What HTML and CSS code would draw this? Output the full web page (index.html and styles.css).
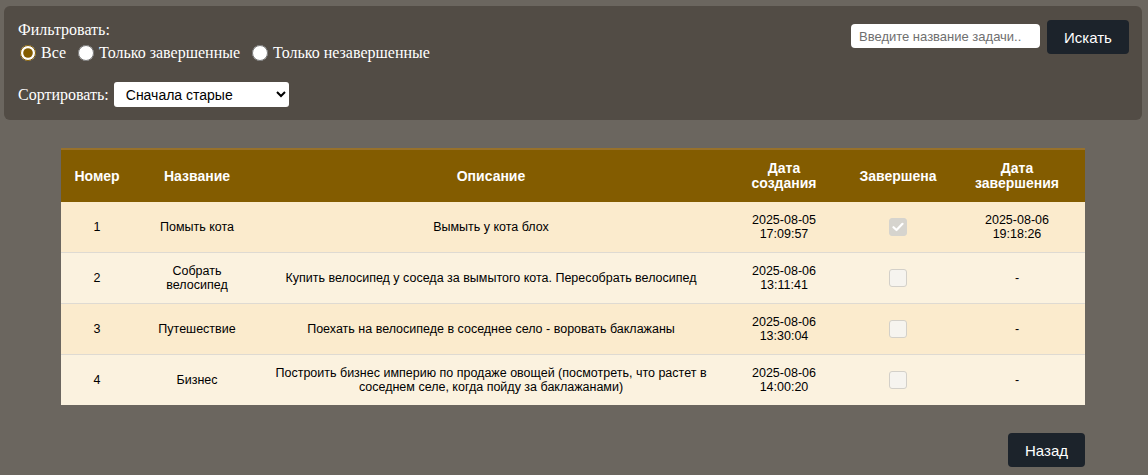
FILE: index.html
```html
<!DOCTYPE html>
<html lang="ru">
<head>
<meta charset="utf-8">
<title>Задачи</title>
<link rel="stylesheet" href="styles.css">
</head>
<body>
<div class="panel">
  <div class="controls">
    <div class="filter-label">Фильтровать:</div>
    <div class="radios">
      <label class="radio"><input type="radio" name="f" checked>Все</label>
      <label class="radio"><input type="radio" name="f">Только завершенные</label>
      <label class="radio"><input type="radio" name="f">Только незавершенные</label>
    </div>
    <div class="sort">
      <span>Сортировать:</span>
      <select class="sort-select"><option>Сначала старые</option></select>
    </div>
  </div>
  <div class="search">
    <input class="search-input" type="text" placeholder="Введите название задачи..">
    <button class="btn">Искать</button>
  </div>
</div>

<div class="content">
  <table class="tasks">
    <colgroup>
      <col class="c1"><col class="c2"><col class="c3"><col class="c4"><col class="c5"><col class="c6">
    </colgroup>
    <thead>
      <tr><th>Номер</th><th>Название</th><th>Описание</th><th>Дата<br>создания</th><th>Завершена</th><th>Дата<br>завершения</th></tr>
    </thead>
    <tbody>
      <tr><td>1</td><td>Помыть кота</td><td>Вымыть у кота блох</td><td>2025-08-05<br>17:09:57</td><td><span class="chk checked" role="checkbox" aria-checked="true" aria-disabled="true"><svg width="12" height="10" viewBox="0 0 12 10"><path d="M1.5 5.2 L4.5 8 L10.5 1.8" fill="none" stroke="#fff" stroke-width="2.2" stroke-linecap="round" stroke-linejoin="round"/></svg></span></td><td>2025-08-06<br>19:18:26</td></tr>
      <tr><td>2</td><td>Собрать<br>велосипед</td><td>Купить велосипед у соседа за вымытого кота. Пересобрать велосипед</td><td>2025-08-06<br>13:11:41</td><td><span class="chk" role="checkbox" aria-checked="false" aria-disabled="true"></span></td><td>-</td></tr>
      <tr><td>3</td><td>Путешествие</td><td>Поехать на велосипеде в соседнее село - воровать баклажаны</td><td>2025-08-06<br>13:30:04</td><td><span class="chk" role="checkbox" aria-checked="false" aria-disabled="true"></span></td><td>-</td></tr>
      <tr><td>4</td><td>Бизнес</td><td>Построить бизнес империю по продаже овощей (посмотреть, что растет в соседнем селе, когда пойду за баклажанами)</td><td>2025-08-06<br>14:00:20</td><td><span class="chk" role="checkbox" aria-checked="false" aria-disabled="true"></span></td><td>-</td></tr>
    </tbody>
  </table>
  <div class="back-row"><button class="btn back">Назад</button></div>
</div>
</body>
</html>
```

FILE: styles.css
```css
html, body {
  margin: 0;
  padding: 0;
}
body {
  background: #6b665f;
  font-family: "Liberation Serif", "Times New Roman", serif;
  color: #fff;
  width: 1148px;
  height: 475px;
  overflow: hidden;
}
.panel {
  margin: 6px 6px 0 4px;
  height: 114px;
  box-sizing: border-box;
  background: #524c45;
  border-radius: 6px;
  padding: 12px 13px 0 14px;
  display: flex;
  justify-content: space-between;
  align-items: flex-start;
}
.controls {
  font-size: 16px;
}
.filter-label {
  line-height: 19px;
  padding-top: 2px;
}
.radios {
  display: flex;
  gap: 10px;
  margin-top: 4px;
  line-height: 19px;
}
.radio {
  display: flex;
  align-items: center;
  gap: 5px;
}
.radio input {
  margin: 0 0 0 2px;
  width: 16px;
  height: 16px;
  accent-color: #835c00;
}
.sort {
  margin-top: 20px;
  display: flex;
  align-items: center;
  gap: 5px;
}
.sort-select {
  width: 175px;
  height: 25px;
  border: none;
  border-radius: 3px;
  background: #fff;
  font-family: "Liberation Sans", Arial, sans-serif;
  font-size: 14px;
  padding: 0 6px 0 8px;
  color: #000;
}
.search {
  display: flex;
  align-items: flex-start;
  gap: 7px;
  padding-top: 2px;
}
.search-input {
  margin-top: 4px;
  width: 189px;
  height: 24px;
  box-sizing: border-box;
  border: none;
  border-radius: 4px;
  padding: 0 8px;
  font-family: "Liberation Sans", Arial, sans-serif;
  font-size: 13px;
  background: #fff;
}
.search-input::placeholder {
  color: #6f6f6f;
}
.btn {
  width: 82px;
  height: 34px;
  border: none;
  border-radius: 4px;
  background: #1c232b;
  color: #fff;
  font-family: "Liberation Sans", Arial, sans-serif;
  font-size: 15px;
  cursor: pointer;
}
.content {
  width: 1024px;
  margin: 28px auto 0;
  position: relative;
  left: -1px;
}
.tasks {
  width: 1024px;
  border-collapse: collapse;
  font-family: "Liberation Sans", Arial, sans-serif;
  table-layout: fixed;
}
.c1 { width: 72px; }
.c2 { width: 128px; }
.c3 { width: 460px; }
.c4 { width: 126px; }
.c5 { width: 102px; }
.c6 { width: 136px; }
.tasks th {
  background: #835c00;
  color: #fff;
  font-size: 14px;
  font-weight: bold;
  line-height: 15px;
  padding: 11px 6px;
  border-top: 2px solid #98712a;
  text-align: center;
}
.tasks td {
  color: #000;
  font-size: 12.5px;
  line-height: 14px;
  padding: 11px 6px;
  text-align: center;
  border-bottom: 1px solid #dedad2;
}
.tasks tbody tr:last-child td {
  border-bottom: none;
}
.tasks tbody tr:nth-child(odd) td {
  background: #fbebcd;
}
.tasks tbody tr:nth-child(even) td {
  background: #fbf2df;
}
.chk {
  display: inline-flex;
  align-items: center;
  justify-content: center;
  width: 18px;
  height: 18px;
  box-sizing: border-box;
  border: 1.5px solid #d3d0c9;
  border-radius: 3px;
  background: #f6f4ef;
  vertical-align: middle;
}
.chk.checked {
  background: #d6d4ce;
  border-color: #d6d4ce;
}
.back-row {
  display: flex;
  justify-content: flex-end;
  margin-top: 28px;
}
.back {
  width: 77px;
}
```
